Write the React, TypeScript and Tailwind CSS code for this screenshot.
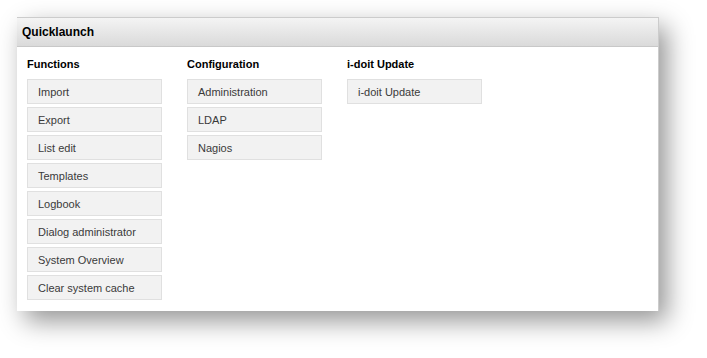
import React from 'react';

const groups: { title: string; items: string[] }[] = [
  {
    title: 'Functions',
    items: ['Import', 'Export', 'List edit', 'Templates', 'Logbook', 'Dialog administrator', 'System Overview', 'Clear system cache'],
  },
  { title: 'Configuration', items: ['Administration', 'LDAP', 'Nagios'] },
  { title: 'i-doit Update', items: ['i-doit Update'] },
];

const QuickButton = ({ label }: { label: string }) => (
  <div className="h-[25px] w-[135px] flex items-center pl-[10px] pt-[1px] bg-[#f2f2f2] border border-[#e0e0e0] text-[11px] text-[#3a3a3a] leading-none">
    {label}
  </div>
);

export default function App() {
  return (
    <div className="w-[707px] h-[358px] bg-white pt-[17px] pl-[17px] font-['Liberation_Sans',Arial,sans-serif]">
      <div className="w-[642px] h-[294px] bg-white border border-[#cccccc] border-b-0 border-l-0 shadow-[8px_10px_24px_rgba(0,0,0,0.42)] flex flex-col">
        <div className="h-[29px] bg-gradient-to-b from-[#f4f4f4] to-[#dadada] border-b border-[#c8c8c8] flex items-center pl-[5px]">
          <span className="text-[12px] font-bold text-black">Quicklaunch</span>
        </div>
        <div className="flex gap-[25px] pl-[10px] pt-[9px]">
          {groups.map(group => (
            <div key={group.title} className="flex flex-col">
              <h3 className="text-[11px] font-bold text-black leading-[16px] mb-[7px]">{group.title}</h3>
              <div className="flex flex-col gap-[3px]">
                {group.items.map(item => (
                  <QuickButton key={item} label={item} />
                ))}
              </div>
            </div>
          ))}
        </div>
      </div>
    </div>
  );
}
